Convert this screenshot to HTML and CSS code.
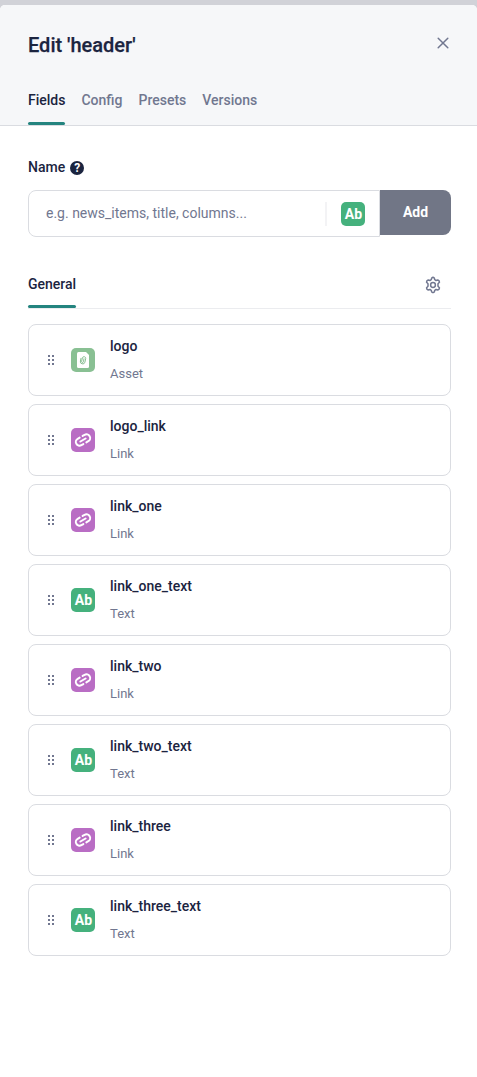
FILE: index.html
```html
<!DOCTYPE html>
<html lang="en">
<head>
<meta charset="utf-8">
<title>Edit 'header'</title>
<link rel="stylesheet" href="styles.css">
</head>
<body>
<svg width="0" height="0" class="defs">
  <symbol id="drag" viewBox="0 0 6 10"><path d="M0 0h2v2H0zM4 0h2v2H4zM0 4h2v2H0zM4 4h2v2H4zM0 8h2v2H0zM4 8h2v2H4z" fill="currentColor"/></symbol>
  <symbol id="link" viewBox="0 0 24 24"><g transform="rotate(-30 12 12)" fill="none" stroke="#fff" stroke-width="2" stroke-linecap="round"><path d="M10.300 8.300H8a3.700 3.700 0 0 0 0 7.400h2.300M13.700 8.300H16a3.700 3.700 0 0 1 0 7.400h-2.300M9 12h6"/></g></symbol>
  <symbol id="asset" viewBox="0 0 24 24"><path d="M7.500 4H15l3 3v11.500a1.500 1.500 0 0 1-1.500 1.500h-9A1.500 1.500 0 0 1 6 18.500v-13A1.500 1.500 0 0 1 7.500 4z" fill="#fff"/><path d="M10 10.300 9.400 13a2.300 2.300 0 0 0 4.500 1.200l.8-3.500a1.700 1.700 0 0 0-3.300-.8l-.8 3.500a.9.900 0 0 0 1.800.4l.6-3" fill="none" stroke="#89c093" stroke-width="1" stroke-linecap="round"/></symbol>
</svg>
<main class="panel">
  <header class="header">
    <div class="title-row">
      <h1>Edit 'header'</h1>
      <svg class="close" width="12" height="12" viewBox="0 0 12 12"><path d="m1.200 1.200 9.600 9.600m0-9.600-9.600 9.600" fill="none" stroke="currentColor" stroke-width="1.500" stroke-linecap="round"/></svg>
    </div>
    <nav class="tabs">
      <a class="tab active">Fields</a><a class="tab">Config</a><a class="tab">Presets</a><a class="tab">Versions</a>
    </nav>
  </header>
  <section class="content">
    <div class="label">Name <span class="help">?</span></div>
    <div class="add-row">
      <div class="input"><span class="placeholder">e.g. news_items, title, columns...</span><span class="divider"></span><span class="badge text">Ab</span></div>
      <div class="add">Add</div>
    </div>
    <div class="group">
      <a class="tab active">General</a>
      <svg class="gear" width="18" height="18" viewBox="0 0 18 18" fill="none" stroke="currentColor" stroke-width="1.500" stroke-linejoin="round"><path d="M7.700 2q1.300-1.200 2.600 0l.4 1.700 1.300.8 1.800-.5q1.800.6 1.600 2.300L14 7.700v2.600l1.400 1.400q.2 1.700-1.600 2.300l-1.800-.5-1.300.8-.4 1.700q-1.300 1.200-2.600 0l-.4-1.700-1.300-.8-1.800.5q-1.800-.6-1.600-2.300L4 10.300V7.700L2.600 6.300Q2.400 4.600 4.200 4l1.800.5 1.300-.8z"/><circle cx="9" cy="9" r="2.400"/></svg>
    </div>
    <ul class="list">
      <li class="card"><svg class="drag"><use href="#drag"/></svg><span class="badge asset"><svg><use href="#asset"/></svg></span><div><b>logo</b><small>Asset</small></div></li>
      <li class="card"><svg class="drag"><use href="#drag"/></svg><span class="badge link"><svg><use href="#link"/></svg></span><div><b>logo_link</b><small>Link</small></div></li>
      <li class="card"><svg class="drag"><use href="#drag"/></svg><span class="badge link"><svg><use href="#link"/></svg></span><div><b>link_one</b><small>Link</small></div></li>
      <li class="card"><svg class="drag"><use href="#drag"/></svg><span class="badge text">Ab</span><div><b>link_one_text</b><small>Text</small></div></li>
      <li class="card"><svg class="drag"><use href="#drag"/></svg><span class="badge link"><svg><use href="#link"/></svg></span><div><b>link_two</b><small>Link</small></div></li>
      <li class="card"><svg class="drag"><use href="#drag"/></svg><span class="badge text">Ab</span><div><b>link_two_text</b><small>Text</small></div></li>
      <li class="card"><svg class="drag"><use href="#drag"/></svg><span class="badge link"><svg><use href="#link"/></svg></span><div><b>link_three</b><small>Link</small></div></li>
      <li class="card"><svg class="drag"><use href="#drag"/></svg><span class="badge text">Ab</span><div><b>link_three_text</b><small>Text</small></div></li>
    </ul>
  </section>
</main>
</body>
</html>
```
FILE: styles.css
```css
* { box-sizing: border-box; }
body { margin: 0; padding-top: 5px; min-height: 1077px; background: #d1d2d8; font: 500 14px/20px Roboto, sans-serif; color: #1b243f; }
.defs { display: none; }
.panel { min-height: 1072px; background: #fff; border-radius: 5px 5px 0 0; overflow: hidden; }
.header { height: 121px; padding: 0 28px; background: #f6f7f9; border-bottom: 1px solid #dadce1; }
.title-row { display: flex; justify-content: space-between; height: 80px; padding-top: 28px; }
h1 { margin: 0; font-size: 20px; line-height: 24px; font-weight: 500; -webkit-text-stroke: .25px #1b243f; }
.close { margin: 4px 0 0 0; color: #717790; }
.tabs { display: flex; gap: 16px; height: 40px; }
.tab { display: block; padding-top: 5px; color: #717790; border-bottom: 3px solid transparent; }
.tab.active { color: #1b243f; position: relative; }
.tab.active::after { content: ""; position: absolute; left: 0; right: 0; bottom: -3px; height: 3px; border-radius: 2px; background: #24847f; }
.content { padding: 31px 26px 0 28px; }
.label { display: flex; align-items: center; gap: 5px; height: 20px; }
.help { width: 14px; height: 14px; margin-top: 1px; border-radius: 50%; background: #1b243f; color: #fff; font-size: 12px; line-height: 14px; font-weight: 700; text-align: center; }
.add-row { display: flex; align-items: flex-start; margin-top: 13px; }
.input { display: flex; align-items: center; width: 352px; height: 47px; padding: 0 14px 0 17px; border: 1px solid #dadce1; border-radius: 8px 0 0 8px; }
.placeholder { flex: 1; font-weight: 400; color: #717790; padding-bottom: 1px; }
.divider { width: 2px; height: 24px; margin-right: 14px; background: #f3f3f5; }
.badge { flex: none; width: 24px; height: 24px; border-radius: 5px; color: #fff; font-size: 14px; line-height: 25px; text-align: center; }
.badge svg { display: block; width: 24px; height: 24px; }
.badge.text { padding-left: 1px; background: #45b17d; font-weight: 700; }
.badge.link { background: #b96dc4; }
.badge.asset { background: #89c093; }
.add { width: 71px; height: 45px; border-radius: 0 8px 8px 0; background: #717686; color: #fff; line-height: 44px; text-align: center; font-weight: 700; }
.group { display: flex; justify-content: space-between; height: 72px; margin-bottom: 15px; padding-top: 32px; border-bottom: 1px solid #ebecef; }
.gear { margin: 7px 9px 0 0; color: #717790; }
.list { display: grid; gap: 8px; margin: 0; padding: 0; list-style: none; }
.card { display: flex; align-items: center; height: 72px; padding-left: 19px; border: 1px solid #dadce1; border-radius: 8px; }
.drag { width: 6px; height: 10px; margin-right: 17px; color: #717790; }
.card .badge { margin-right: 15px; }
.card b, .card small { display: block; }
.card b { font-weight: 500; line-height: 20px; margin-bottom: 9px; margin-top: -1px; }
.card small { font-size: 13px; line-height: 18px; font-weight: 400; color: #717790; }
```
